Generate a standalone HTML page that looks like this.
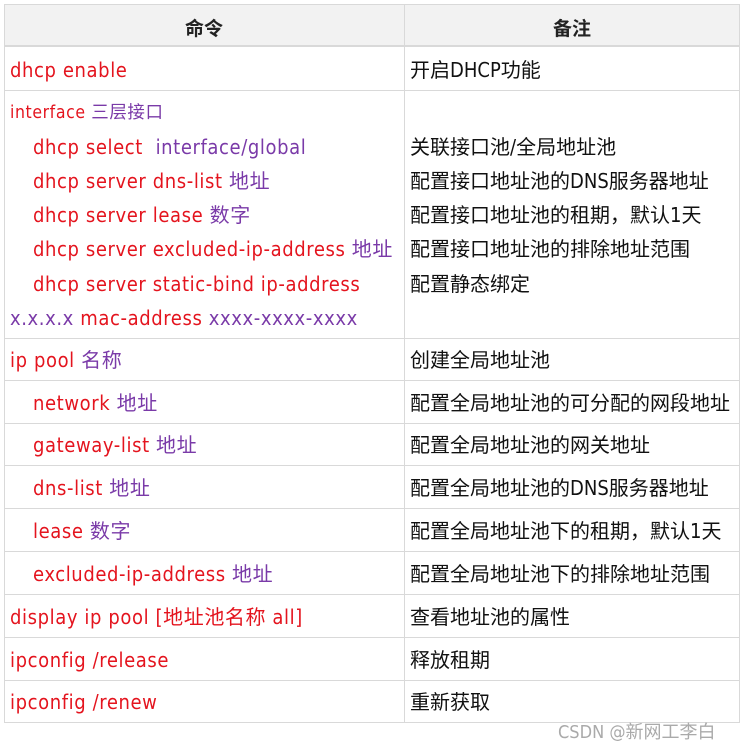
<!DOCTYPE html>
<html><head><meta charset="utf-8"><style>
body{margin:0;width:743px;height:750px;background:#fff;position:relative;overflow:hidden;font-family:"DejaVu Sans Condensed","Liberation Sans","Noto Sans CJK SC",sans-serif;}
.t{position:absolute;font-size:20px;line-height:24px;white-space:nowrap;color:#111;}
.r{color:#e4141e;letter-spacing:0.6px}.p{color:#7a3aa8}
.h{position:absolute;background:#d9d9d9;height:1px;left:4px;width:736px}
.v{position:absolute;background:#d9d9d9;width:1px;top:4px;height:718px}
.hd{position:absolute;font-weight:bold;font-size:19px;color:#222;}
</style></head><body>
<div style="position:absolute;left:4px;top:4px;width:736px;height:41px;background:#f2f2f2"></div>
<div class="h" style="top:4px"></div>
<div class="h" style="top:45px;height:2px"></div>
<div class="h" style="top:90px"></div>
<div class="h" style="top:338px"></div>
<div class="h" style="top:380px"></div>
<div class="h" style="top:423px"></div>
<div class="h" style="top:465px"></div>
<div class="h" style="top:508px"></div>
<div class="h" style="top:551px"></div>
<div class="h" style="top:594px"></div>
<div class="h" style="top:637px"></div>
<div class="h" style="top:680px"></div>
<div class="h" style="top:722px"></div>
<div class="v" style="left:4px"></div>
<div class="v" style="left:404px"></div>
<div class="v" style="left:739px"></div>
<div class="hd" style="left:185px;top:14px">命令</div>
<div class="hd" style="left:553px;top:14px">备注</div>

<div class="t r" style="left:10px;top:58px">dhcp enable</div>
<div class="t" style="left:410px;top:58px">开启DHCP功能</div>

<div class="t r" style="left:10px;top:101px;font-size:17.5px">interface <span class="p">三层接口</span></div>
<div class="t r" style="left:33px;top:135px">dhcp select &nbsp;<span class="p">interface/global</span></div>
<div class="t r" style="left:33px;top:169px">dhcp server dns-list <span class="p">地址</span></div>
<div class="t r" style="left:33px;top:203px">dhcp server lease <span class="p">数字</span></div>
<div class="t r" style="left:33px;top:237px">dhcp server excluded-ip-address <span class="p">地址</span></div>
<div class="t r" style="left:33px;top:272px">dhcp server static-bind ip-address</div>
<div class="t r" style="left:10px;top:306px"><span class="p">x.x.x.x</span> mac-address <span class="p">xxxx-xxxx-xxxx</span></div>
<div class="t" style="left:410px;top:135px">关联接口池/全局地址池</div>
<div class="t" style="left:410px;top:169px">配置接口地址池的DNS服务器地址</div>
<div class="t" style="left:410px;top:203px">配置接口地址池的租期，默认1天</div>
<div class="t" style="left:410px;top:237px">配置接口地址池的排除地址范围</div>
<div class="t" style="left:410px;top:272px">配置静态绑定</div>

<div class="t r" style="left:10px;top:348px">ip pool <span class="p">名称</span></div>
<div class="t" style="left:410px;top:348px">创建全局地址池</div>
<div class="t r" style="left:33px;top:391px">network <span class="p">地址</span></div>
<div class="t" style="left:410px;top:391px">配置全局地址池的可分配的网段地址</div>
<div class="t r" style="left:33px;top:433px">gateway-list <span class="p">地址</span></div>
<div class="t" style="left:410px;top:433px">配置全局地址池的网关地址</div>
<div class="t r" style="left:33px;top:476px">dns-list <span class="p">地址</span></div>
<div class="t" style="left:410px;top:476px">配置全局地址池的DNS服务器地址</div>
<div class="t r" style="left:33px;top:519px">lease <span class="p">数字</span></div>
<div class="t" style="left:410px;top:519px">配置全局地址池下的租期，默认1天</div>
<div class="t r" style="left:33px;top:562px">excluded-ip-address <span class="p">地址</span></div>
<div class="t" style="left:410px;top:562px">配置全局地址池下的排除地址范围</div>
<div class="t r" style="left:10px;top:605px">display ip pool [地址池名称 all]</div>
<div class="t" style="left:410px;top:605px">查看地址池的属性</div>
<div class="t r" style="left:10px;top:648px">ipconfig /release</div>
<div class="t" style="left:410px;top:648px">释放租期</div>
<div class="t r" style="left:10px;top:690px">ipconfig /renew</div>
<div class="t" style="left:410px;top:690px">重新获取</div>
<div class="t" style="left:558px;top:721px;font-size:18px;color:#aaa">CSDN @新网工李白</div>
</body></html>
